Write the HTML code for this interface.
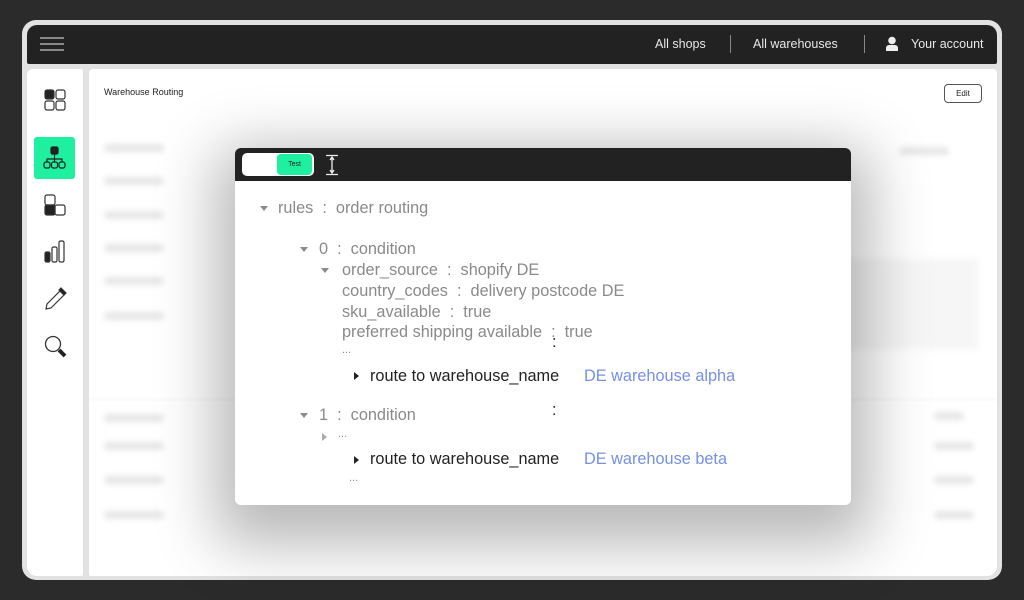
<!DOCTYPE html>
<html><head><meta charset="utf-8"><style>
*{margin:0;padding:0;box-sizing:border-box}
body{width:1024px;height:600px;background:#2b2b2b;position:relative;overflow:hidden;font-family:"Liberation Sans",sans-serif}
.abs{position:absolute}
.frame{left:22px;top:20px;width:980px;height:560px;background:#e2e2e2;border-radius:14px}
.top{left:27px;top:25px;width:970px;height:39px;background:#222;border-radius:10px 10px 2px 2px}
.nav{color:#e8e8e8;font-size:12.5px;top:37px}
.side{left:27px;top:69px;width:56px;height:507px;background:#fff;border-radius:6px 2px 2px 10px}
.main{left:89px;top:69px;width:908px;height:507px;background:#fff;border-radius:4px 4px 10px 2px;overflow:hidden}
.bl{position:absolute;background:#e6e6e6;height:8px;border-radius:4px;filter:blur(3px)}
.modal{left:235px;top:148px;width:616px;height:357px;background:#fff;border-radius:6px;box-shadow:0 20px 60px 20px rgba(0,0,0,.28);overflow:hidden}
.mh{height:33px;background:#222}
.t{position:absolute;font-size:16.3px;color:#8a8a8a;white-space:nowrap;line-height:18px}
.d{color:#222}.b{color:#7590e6}
.tri{position:absolute;width:0;height:0;border-left:4px solid transparent;border-right:4px solid transparent;border-top:5px solid #8a8a8a}
.trr{position:absolute;width:0;height:0;border-top:4px solid transparent;border-bottom:4px solid transparent;border-left:5px solid #222}
</style></head><body>
<div class="abs frame"></div>
<div class="abs top"></div>
<div class="abs" style="left:40px;top:37px;width:24px;height:1.5px;background:#888"></div>
<div class="abs" style="left:40px;top:43px;width:24px;height:1.5px;background:#888"></div>
<div class="abs" style="left:40px;top:49px;width:24px;height:1.5px;background:#888"></div>
<div class="abs nav" style="left:655px">All shops</div>
<div class="abs" style="left:730px;top:35px;width:1px;height:18px;background:#888"></div>
<div class="abs nav" style="left:753px">All warehouses</div>
<div class="abs" style="left:864px;top:35px;width:1px;height:18px;background:#888"></div>
<svg class="abs" style="left:885px;top:36px" width="14" height="16"><circle cx="7" cy="4.5" r="3.8" fill="#eee"/><path d="M1 15v-3a3 3 0 0 1 3-3h6a3 3 0 0 1 3 3v3z" fill="#eee"/></svg>
<div class="abs nav" style="left:911px">Your account</div>

<div class="abs side"></div>
<svg class="abs" style="left:44px;top:89px" width="22" height="22" fill="none" stroke="#333" stroke-width="1.2"><rect x="1" y="1" width="9" height="9" rx="2" fill="#222"/><rect x="12" y="1" width="9" height="9" rx="2"/><rect x="1" y="12" width="9" height="9" rx="2"/><rect x="12" y="12" width="9" height="9" rx="2"/></svg>
<div class="abs" style="left:34px;top:137px;width:41px;height:42px;background:#1ef0a0;border-radius:3px"></div>
<svg class="abs" style="left:43px;top:146px" width="24" height="24" fill="none" stroke="#222" stroke-width="1.2"><rect x="8" y="1" width="7" height="7" rx="1.5" fill="#222"/><path d="M11.5 8v5M4 16v-3h15v3M11.5 13v3"/><rect x="1" y="16" width="6" height="6" rx="2"/><rect x="8.5" y="16" width="6" height="6" rx="2"/><rect x="16" y="16" width="6" height="6" rx="2"/></svg>
<svg class="abs" style="left:44px;top:194px" width="24" height="24" fill="none" stroke="#333" stroke-width="1.2"><rect x="1" y="1" width="10" height="10" rx="2"/><rect x="1" y="11" width="10" height="10" rx="2" fill="#222"/><rect x="11" y="11" width="10" height="10" rx="2"/></svg>
<svg class="abs" style="left:44px;top:240px" width="24" height="24" fill="none" stroke="#333" stroke-width="1.2"><rect x="1" y="12" width="5" height="10" rx="1.5" fill="#222"/><rect x="8" y="7" width="5" height="15" rx="1.5"/><rect x="15" y="1" width="5" height="21" rx="1.5"/></svg>
<svg class="abs" style="left:44px;top:287px" width="24" height="24" fill="none" stroke="#333" stroke-width="1.2"><path d="M2 22l1-5L16 4l4 4L7 21z"/><path d="M15 3l2-2 5 5-2 2z" fill="#222"/></svg>
<svg class="abs" style="left:44px;top:335px" width="24" height="24" fill="none" stroke="#333" stroke-width="1.3"><circle cx="9" cy="9" r="7.5"/><path d="M15 15l6 6" stroke="#222" stroke-width="4"/></svg>

<div class="abs main">
<div class="abs" style="left:15px;top:18px;font-size:9px;color:#222">Warehouse Routing</div>
<div class="abs" style="left:855px;top:15px;width:38px;height:19px;border:1px solid #555;border-radius:4px;font-size:8px;text-align:center;line-height:17px;color:#222">Edit</div>
<div class="bl" style="left:15px;top:75px;width:60px"></div>
<div class="bl" style="left:15px;top:108px;width:60px"></div>
<div class="bl" style="left:15px;top:142px;width:60px"></div>
<div class="bl" style="left:15px;top:175px;width:60px"></div>
<div class="bl" style="left:15px;top:208px;width:60px"></div>
<div class="bl" style="left:15px;top:243px;width:60px"></div>
<div class="bl" style="left:15px;top:345px;width:60px"></div>
<div class="bl" style="left:15px;top:373px;width:60px"></div>
<div class="bl" style="left:15px;top:407px;width:60px"></div>
<div class="bl" style="left:15px;top:442px;width:60px"></div>
<div class="bl" style="left:810px;top:78px;width:50px"></div>
<div class="bl" style="left:845px;top:343px;width:30px"></div>
<div class="bl" style="left:845px;top:373px;width:40px"></div>
<div class="bl" style="left:845px;top:407px;width:40px"></div>
<div class="bl" style="left:845px;top:442px;width:40px"></div>
<div class="abs" style="left:0;top:330px;width:908px;height:1px;background:#f2f2f2;filter:blur(1px)"></div>
<div class="abs" style="left:700px;top:190px;width:190px;height:90px;background:#f6f6f6;filter:blur(4px)"></div>
</div>

<div class="abs modal">
<div class="mh"></div>
<div class="abs" style="left:7px;top:5px;width:72px;height:23px;background:#fff;border-radius:5px"></div>
<div class="abs" style="left:42px;top:6px;width:35px;height:21px;background:#1ef0a0;border-radius:4px;font-size:7px;text-align:center;line-height:21px;color:#222">Test</div>
<svg class="abs" style="left:89px;top:6px" width="16" height="22" stroke="#eee" stroke-width="1.3" fill="none"><path d="M2 1.5h12M2 20.5h12M8 3v16M6 6l2-3 2 3M6 16l2 3 2-3"/></svg>
<div class="tri" style="left:25px;top:58px"></div><div class="t" style="left:43px;top:51px">rules &nbsp;:&nbsp; order routing</div>
<div class="tri" style="left:65px;top:99px"></div><div class="t" style="left:84px;top:92px">0 &nbsp;:&nbsp; condition</div>
<div class="tri" style="left:86px;top:120px"></div><div class="t" style="left:107px;top:113px">order_source &nbsp;:&nbsp; shopify DE</div>
<div class="t" style="left:107px;top:134px">country_codes &nbsp;:&nbsp; delivery postcode DE</div>
<div class="t" style="left:107px;top:155px">sku_available &nbsp;:&nbsp; true</div>
<div class="t" style="left:107px;top:175px">preferred shipping available &nbsp;:&nbsp; true</div>
<div class="t" style="left:317px;top:185px;color:#222">:</div>
<div class="t" style="left:107px;top:193px;font-size:11px">...</div>
<div class="trr" style="left:119px;top:224px"></div><div class="t d" style="left:135px;top:219px">route to warehouse_name</div><div class="t b" style="left:349px;top:219px">DE warehouse alpha</div>
<div class="tri" style="left:65px;top:265px"></div><div class="t" style="left:84px;top:258px">1 &nbsp;:&nbsp; condition</div>
<div class="t" style="left:317px;top:253px;color:#222">:</div>
<div class="trr" style="left:87px;top:285px;border-left-color:#aaa"></div><div class="t" style="left:103px;top:277px;font-size:11px">...</div>
<div class="trr" style="left:119px;top:308px"></div><div class="t d" style="left:135px;top:302px">route to warehouse_name</div><div class="t b" style="left:349px;top:302px">DE warehouse beta</div>
<div class="t" style="left:114px;top:321px;font-size:11px">...</div>
</div>
</body></html>
